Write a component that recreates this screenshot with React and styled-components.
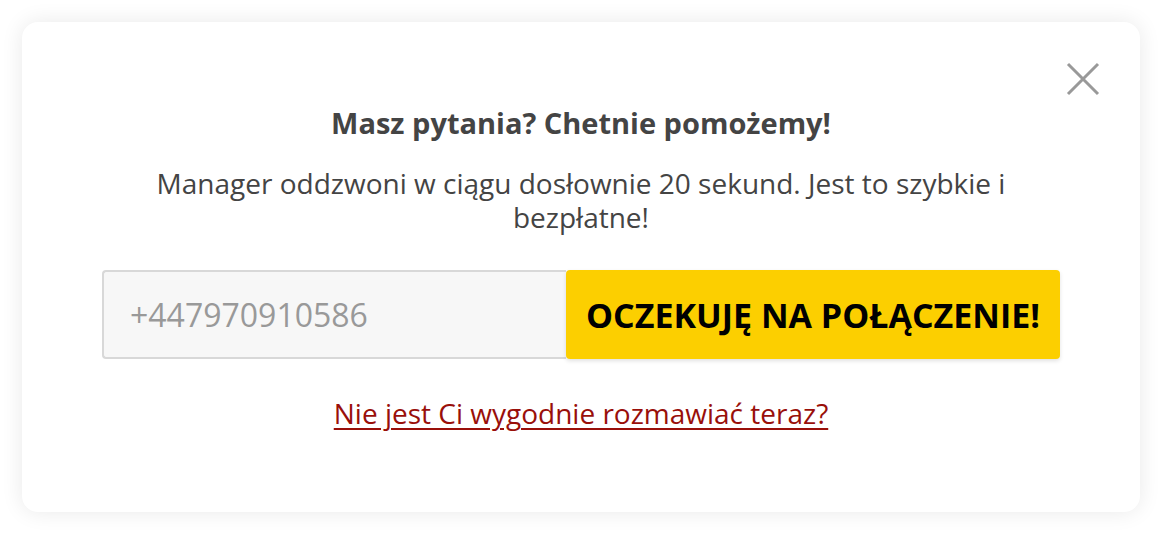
import React from "react";
import styled, { createGlobalStyle } from "styled-components";

const Global = createGlobalStyle`
  html, body { margin: 0; padding: 0; background: #ffffff; }
  body { font-family: "Open Sans", "Noto Sans", sans-serif; }
  * { box-sizing: border-box; }
`;

const Page = styled.div`
  width: 1162px;
  height: 534px;
  padding: 22px;
`;

const Card = styled.div`
  position: relative;
  height: 490px;
  background: #fff;
  border-radius: 16px;
  box-shadow: 0 0 22px rgba(0, 0, 0, 0.09);
  display: flex;
  flex-direction: column;
  align-items: center;
  padding-top: 84px;
`;

const Close = styled.button`
  position: absolute;
  top: 40px;
  right: 40px;
  width: 34px;
  height: 34px;
  padding: 0;
  border: none;
  background: none;
  cursor: pointer;
`;

const Title = styled.h2`
  margin: 0;
  font-size: 29px;
  font-weight: 700;
  color: #444;
  line-height: 34px;
`;

const Sub = styled.p`
  margin: 26px 0 0;
  width: 900px;
  text-align: center;
  font-size: 28px;
  line-height: 34px;
  color: #444;
`;

const Form = styled.form`
  margin-top: 36px;
  display: flex;
  width: 958px;
  height: 89px;
`;

const Phone = styled.input`
  flex: 0 0 464px;
  height: 100%;
  border: 2px solid #d8d8d8;
  border-right: none;
  border-radius: 4px 0 0 4px;
  background: #f7f7f7;
  padding: 0 26px;
  font-family: "Open Sans", sans-serif;
  font-size: 32px;
  color: #999;
  outline: none;
  &::placeholder { color: #999; }
`;

const Submit = styled.button`
  flex: 1;
  height: 100%;
  border: none;
  border-radius: 4px;
  background: #fccf00;
  box-shadow: 0 2px 4px rgba(0, 0, 0, 0.12);
  font-family: "Open Sans", sans-serif;
  font-weight: 700;
  font-size: 34px;
  color: #000;
  cursor: pointer;
`;

const Later = styled.a`
  margin-top: 35px;
  font-size: 28px;
  line-height: 38px;
  color: #990f0a;
  text-decoration: underline;
  text-underline-offset: 4px;
  text-decoration-thickness: 2px;
`;

export default function App() {
  return (
    <Page>
      <Global />
      <Card>
        <Close aria-label="Zamknij">
          <svg width="34" height="34" viewBox="0 0 34 34">
            <path d="M2 2 L32 32 M32 2 L2 32" stroke="#999" strokeWidth="3" />
          </svg>
        </Close>
        <Title>Masz pytania? Chetnie pomożemy!</Title>
        <Sub>Manager oddzwoni w ciągu dosłownie 20 sekund. Jest to szybkie i bezpłatne!</Sub>
        <Form onSubmit={(e) => e.preventDefault()}>
          <Phone type="tel" placeholder="+447970910586" />
          <Submit type="submit">OCZEKUJĘ NA POŁĄCZENIE!</Submit>
        </Form>
        <Later href="#">Nie jest Ci wygodnie rozmawiać teraz?</Later>
      </Card>
    </Page>
  );
}
